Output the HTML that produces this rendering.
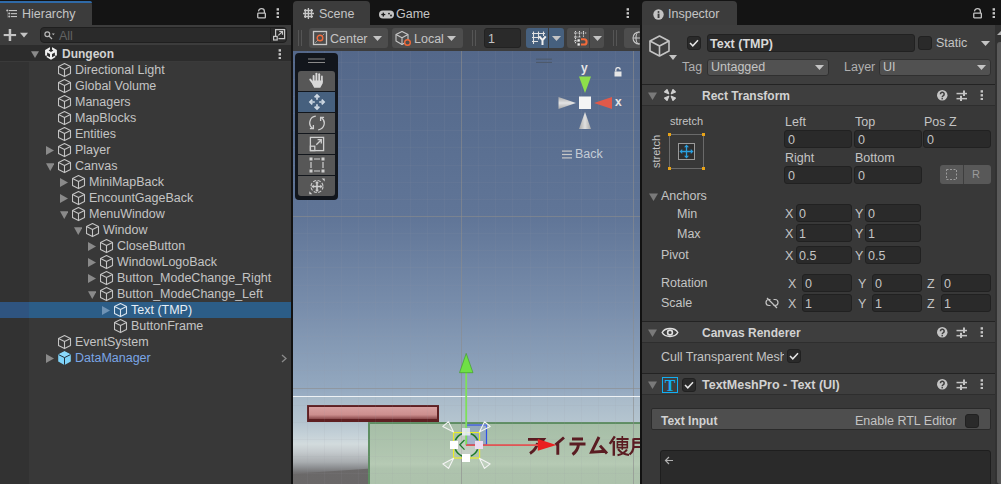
<!DOCTYPE html>
<html><head><meta charset="utf-8"><style>
html,body{margin:0;padding:0;}
body{width:1001px;height:484px;overflow:hidden;position:relative;background:#191919;font-family:"Liberation Sans", sans-serif;}
.a{position:absolute;}
.t{white-space:nowrap;line-height:1;}
svg{display:block;}
</style></head><body>
<div class="a" style="left:0px;top:0px;width:1001px;height:25px;background:#141414;"></div><div class="a" style="left:0px;top:1px;width:92px;height:24px;background:#3c3c3c;border-top-right-radius:4px;"></div><div class="a" style="left:0px;top:1px;width:92px;height:2px;background:#2f6aa8;border-top-right-radius:4px;"></div><svg class="a" style="left:6px;top:9px;" width="12" height="10" viewBox="0 0 12 10"><g fill="#c4c4c4"><rect x="2.9" y="1" width="8.1" height="1.1"/><rect x="4.9" y="4.1" width="6.1" height="1.1"/><rect x="4.9" y="7" width="6.1" height="1.1"/><circle cx="1.3" cy="1.5" r="1.1"/><circle cx="3.2" cy="4.6" r="1"/><circle cx="3.2" cy="7.5" r="1"/></g><rect x="1" y="2.6" width="0.7" height="6" fill="#6a6a6a"/></svg><div class="a t" style="left:22px;top:8px;font-size:12.5px;color:#c4c4c4;font-weight:400;">Hierarchy</div><svg class="a" style="left:257px;top:8px;" width="10" height="11" viewBox="0 0 10 11"><g fill="none" stroke="#c4c4c4" stroke-width="1.3"><rect x="0.75" y="5.2" width="7.6" height="4.6" rx="0.6"/><path d="M1.6 3.4 A2.9 2.6 0 0 1 7.4 3.2 V5"/></g></svg><svg class="a" style="left:276px;top:8px;" width="4" height="10" viewBox="0 0 4 10"><g fill="#c4c4c4"><rect x="0.6" y="0.2" width="2.4" height="2.4"/><rect x="0.6" y="4.1" width="2.4" height="2.4"/><rect x="0.6" y="8" width="2.4" height="2.4"/></g></svg><div class="a" style="left:293px;top:1px;width:77px;height:24px;background:#3c3c3c;border-top-left-radius:4px;border-top-right-radius:4px;"></div><svg class="a" style="left:302px;top:7px;" width="13" height="13" viewBox="0 0 13 13"><g stroke="#c8c8c8" stroke-width="1.3"><path d="M3.3 2 V11 M6.4 1 V12 M9.5 2 V11 M2 3.5 H11 M1 6.5 H12 M2 9.5 H11"/></g></svg><div class="a t" style="left:319px;top:8px;font-size:12.5px;color:#c4c4c4;font-weight:400;">Scene</div><svg class="a" style="left:379px;top:10px;" width="15" height="9" viewBox="0 0 15 9"><path d="M4 0.5 H11 A4 4 0 0 1 11 8.5 H4 A4 4 0 0 1 4 0.5 Z" fill="#c4c4c4"/><g fill="#191919"><rect x="2.3" y="3.9" width="4" height="1.3"/><rect x="3.65" y="2.6" width="1.3" height="4"/><circle cx="10" cy="3.6" r="0.9"/><circle cx="12" cy="5.5" r="0.9"/></g></svg><div class="a t" style="left:396px;top:8px;font-size:12.5px;color:#c4c4c4;font-weight:400;">Game</div><svg class="a" style="left:626px;top:8px;" width="4" height="10" viewBox="0 0 4 10"><g fill="#c4c4c4"><rect x="0.6" y="0.2" width="2.4" height="2.4"/><rect x="0.6" y="4.1" width="2.4" height="2.4"/><rect x="0.6" y="8" width="2.4" height="2.4"/></g></svg><div class="a" style="left:642px;top:1px;width:95px;height:24px;background:#3c3c3c;border-top-left-radius:4px;border-top-right-radius:4px;"></div><svg class="a" style="left:653px;top:9px;" width="11" height="11" viewBox="0 0 11 11"><circle cx="5.5" cy="5.5" r="5.2" fill="#c4c4c4"/><rect x="4.6" y="4.6" width="1.9" height="4.4" fill="#3c3c3c"/><circle cx="5.5" cy="2.9" r="1" fill="#3c3c3c"/></svg><div class="a t" style="left:668px;top:8px;font-size:12.5px;color:#c4c4c4;font-weight:400;">Inspector</div><svg class="a" style="left:973px;top:8px;" width="10" height="11" viewBox="0 0 10 11"><g fill="none" stroke="#c4c4c4" stroke-width="1.3"><rect x="0.75" y="5.2" width="7.6" height="4.6" rx="0.6"/><path d="M1.6 3.4 A2.9 2.6 0 0 1 7.4 3.2 V5"/></g></svg><svg class="a" style="left:992px;top:8px;" width="4" height="10" viewBox="0 0 4 10"><g fill="#c4c4c4"><rect x="0.6" y="0.2" width="2.4" height="2.4"/><rect x="0.6" y="4.1" width="2.4" height="2.4"/><rect x="0.6" y="8" width="2.4" height="2.4"/></g></svg><div class="a" style="left:0px;top:25px;width:291px;height:20px;background:#3c3c3c;"></div><div class="a" style="left:0px;top:45px;width:291px;height:439px;background:#383838;"></div><div class="a" style="left:0px;top:62px;width:29px;height:422px;background:#323232;"></div><div class="a" style="left:291px;top:25px;width:2px;height:459px;background:#121212;"></div><svg class="a" style="left:3px;top:28px;" width="26" height="14" viewBox="0 0 26 14"><g fill="#c4c4c4"><rect x="0.7" y="6" width="12.4" height="2.1"/><rect x="5.7" y="1" width="2.5" height="12"/><path d="M17 4.7 H25 L21 9.4 Z"/></g></svg><div class="a" style="left:40px;top:27px;width:247px;height:16px;background:#2a2a2a;border:1px solid #1f1f1f;border-radius:4px;box-sizing:border-box;"></div><div class="a" style="left:270px;top:28px;width:1px;height:14px;background:#1f1f1f;"></div><svg class="a" style="left:44px;top:31px;" width="12" height="9" viewBox="0 0 12 9"><g fill="none" stroke="#b8b8b8" stroke-width="1.2"><circle cx="3.3" cy="3.3" r="2.4"/><path d="M5 5 L8 8"/></g><path d="M7.8 2.5 H10.8 L9.3 4.3 Z" fill="#b8b8b8"/></svg><div class="a t" style="left:59px;top:30px;font-size:12.5px;color:#626262;font-weight:400;">All</div><svg class="a" style="left:272px;top:28px;" width="15" height="14" viewBox="0 0 15 14"><g fill="none" stroke="#c8c8c8" stroke-width="1.2"><path d="M3.6 8 V1.6 H12.6 V10.6 H6.5"/><rect x="1.6" y="8.4" width="3.6" height="3.6"/><path d="M6.3 7.4 L10.4 3.6 M7.3 3.5 H10.5 V6.7"/></g></svg><div class="a" style="left:0px;top:45px;width:291px;height:16px;background:#2c2c2c;"></div><div class="a" style="left:0px;top:61px;width:291px;height:1px;background:#3a3a3a;"></div><svg class="a" style="left:31px;top:51px;" width="8" height="7" viewBox="0 0 8 7"><path d="M0 0.3 H8 L4.0 7 Z" fill="#8a8a8a"/></svg><svg class="a" style="left:44px;top:46px;" width="14" height="15" viewBox="0 0 14 15"><path d="M7 0.5 L12.9 3.9 V10.2 L7 13.8 L1.1 10.2 V3.9 Z" fill="#f0f0f0"/><g fill="#2c2c2c"><path d="M5.9 0 H8.1 L8 3.5 L9.4 4.6 L7 5.9 L4.6 4.6 L6 3.5 Z"/><path d="M3.1 6.6 L6 7.9 V11.3 L3.1 9.7 Z"/><path d="M10.9 6.6 L8 7.9 V11.3 L10.9 9.7 Z"/><path d="M0.5 9.5 L3.1 9.7 L2.3 11.2 L0.5 10.8 Z"/><path d="M13.5 9.5 L10.9 9.7 L11.7 11.2 L13.5 10.8 Z"/></g></svg><div class="a t" style="left:62px;top:48px;font-size:12px;color:#d2d2d2;font-weight:700;">Dungeon</div><svg class="a" style="left:278px;top:49px;" width="4" height="10" viewBox="0 0 4 10"><g fill="#c4c4c4"><rect x="0.6" y="0.2" width="2.4" height="2.4"/><rect x="0.6" y="4.1" width="2.4" height="2.4"/><rect x="0.6" y="8" width="2.4" height="2.4"/></g></svg><svg class="a" style="left:58px;top:63px;" width="14" height="15" viewBox="0 0 14 15"><g fill="none" stroke="#c4c4c4" stroke-width="1.1" stroke-linejoin="round"><path d="M6.5 0.6 L12.5 3.6 V10.5 L6.5 13.6 L0.5 10.5 V3.6 Z"/><path d="M0.5 3.6 L6.5 6.6 L12.5 3.6 M6.5 6.6 V13.6"/></g></svg><div class="a t" style="left:75px;top:64px;font-size:12.5px;color:#c4c4c4;font-weight:400;">Directional Light</div><svg class="a" style="left:58px;top:79px;" width="14" height="15" viewBox="0 0 14 15"><g fill="none" stroke="#c4c4c4" stroke-width="1.1" stroke-linejoin="round"><path d="M6.5 0.6 L12.5 3.6 V10.5 L6.5 13.6 L0.5 10.5 V3.6 Z"/><path d="M0.5 3.6 L6.5 6.6 L12.5 3.6 M6.5 6.6 V13.6"/></g></svg><div class="a t" style="left:75px;top:80px;font-size:12.5px;color:#c4c4c4;font-weight:400;">Global Volume</div><svg class="a" style="left:58px;top:95px;" width="14" height="15" viewBox="0 0 14 15"><g fill="none" stroke="#c4c4c4" stroke-width="1.1" stroke-linejoin="round"><path d="M6.5 0.6 L12.5 3.6 V10.5 L6.5 13.6 L0.5 10.5 V3.6 Z"/><path d="M0.5 3.6 L6.5 6.6 L12.5 3.6 M6.5 6.6 V13.6"/></g></svg><div class="a t" style="left:75px;top:96px;font-size:12.5px;color:#c4c4c4;font-weight:400;">Managers</div><svg class="a" style="left:58px;top:111px;" width="14" height="15" viewBox="0 0 14 15"><g fill="none" stroke="#c4c4c4" stroke-width="1.1" stroke-linejoin="round"><path d="M6.5 0.6 L12.5 3.6 V10.5 L6.5 13.6 L0.5 10.5 V3.6 Z"/><path d="M0.5 3.6 L6.5 6.6 L12.5 3.6 M6.5 6.6 V13.6"/></g></svg><div class="a t" style="left:75px;top:112px;font-size:12.5px;color:#c4c4c4;font-weight:400;">MapBlocks</div><svg class="a" style="left:58px;top:127px;" width="14" height="15" viewBox="0 0 14 15"><g fill="none" stroke="#c4c4c4" stroke-width="1.1" stroke-linejoin="round"><path d="M6.5 0.6 L12.5 3.6 V10.5 L6.5 13.6 L0.5 10.5 V3.6 Z"/><path d="M0.5 3.6 L6.5 6.6 L12.5 3.6 M6.5 6.6 V13.6"/></g></svg><div class="a t" style="left:75px;top:128px;font-size:12.5px;color:#c4c4c4;font-weight:400;">Entities</div><svg class="a" style="left:46px;top:146px;" width="8" height="9" viewBox="0 0 8 9"><path d="M0 0 V9 L8 4.5 Z" fill="#8a8a8a"/></svg><svg class="a" style="left:58px;top:143px;" width="14" height="15" viewBox="0 0 14 15"><g fill="none" stroke="#c4c4c4" stroke-width="1.1" stroke-linejoin="round"><path d="M6.5 0.6 L12.5 3.6 V10.5 L6.5 13.6 L0.5 10.5 V3.6 Z"/><path d="M0.5 3.6 L6.5 6.6 L12.5 3.6 M6.5 6.6 V13.6"/></g></svg><div class="a t" style="left:75px;top:144px;font-size:12.5px;color:#c4c4c4;font-weight:400;">Player</div><svg class="a" style="left:45.5px;top:163px;" width="8.5" height="8" viewBox="0 0 8.5 8"><path d="M0 0.3 H8.5 L4.25 8 Z" fill="#8a8a8a"/></svg><svg class="a" style="left:58px;top:159px;" width="14" height="15" viewBox="0 0 14 15"><g fill="none" stroke="#c4c4c4" stroke-width="1.1" stroke-linejoin="round"><path d="M6.5 0.6 L12.5 3.6 V10.5 L6.5 13.6 L0.5 10.5 V3.6 Z"/><path d="M0.5 3.6 L6.5 6.6 L12.5 3.6 M6.5 6.6 V13.6"/></g></svg><div class="a t" style="left:75px;top:160px;font-size:12.5px;color:#c4c4c4;font-weight:400;">Canvas</div><svg class="a" style="left:60px;top:178px;" width="8" height="9" viewBox="0 0 8 9"><path d="M0 0 V9 L8 4.5 Z" fill="#8a8a8a"/></svg><svg class="a" style="left:72px;top:175px;" width="14" height="15" viewBox="0 0 14 15"><g fill="none" stroke="#c4c4c4" stroke-width="1.1" stroke-linejoin="round"><path d="M6.5 0.6 L12.5 3.6 V10.5 L6.5 13.6 L0.5 10.5 V3.6 Z"/><path d="M0.5 3.6 L6.5 6.6 L12.5 3.6 M6.5 6.6 V13.6"/></g></svg><div class="a t" style="left:89px;top:176px;font-size:12.5px;color:#c4c4c4;font-weight:400;">MiniMapBack</div><svg class="a" style="left:60px;top:194px;" width="8" height="9" viewBox="0 0 8 9"><path d="M0 0 V9 L8 4.5 Z" fill="#8a8a8a"/></svg><svg class="a" style="left:72px;top:191px;" width="14" height="15" viewBox="0 0 14 15"><g fill="none" stroke="#c4c4c4" stroke-width="1.1" stroke-linejoin="round"><path d="M6.5 0.6 L12.5 3.6 V10.5 L6.5 13.6 L0.5 10.5 V3.6 Z"/><path d="M0.5 3.6 L6.5 6.6 L12.5 3.6 M6.5 6.6 V13.6"/></g></svg><div class="a t" style="left:89px;top:192px;font-size:12.5px;color:#c4c4c4;font-weight:400;">EncountGageBack</div><svg class="a" style="left:59.5px;top:211px;" width="8.5" height="8" viewBox="0 0 8.5 8"><path d="M0 0.3 H8.5 L4.25 8 Z" fill="#8a8a8a"/></svg><svg class="a" style="left:72px;top:207px;" width="14" height="15" viewBox="0 0 14 15"><g fill="none" stroke="#c4c4c4" stroke-width="1.1" stroke-linejoin="round"><path d="M6.5 0.6 L12.5 3.6 V10.5 L6.5 13.6 L0.5 10.5 V3.6 Z"/><path d="M0.5 3.6 L6.5 6.6 L12.5 3.6 M6.5 6.6 V13.6"/></g></svg><div class="a t" style="left:89px;top:208px;font-size:12.5px;color:#c4c4c4;font-weight:400;">MenuWindow</div><svg class="a" style="left:73.5px;top:227px;" width="8.5" height="8" viewBox="0 0 8.5 8"><path d="M0 0.3 H8.5 L4.25 8 Z" fill="#8a8a8a"/></svg><svg class="a" style="left:86px;top:223px;" width="14" height="15" viewBox="0 0 14 15"><g fill="none" stroke="#c4c4c4" stroke-width="1.1" stroke-linejoin="round"><path d="M6.5 0.6 L12.5 3.6 V10.5 L6.5 13.6 L0.5 10.5 V3.6 Z"/><path d="M0.5 3.6 L6.5 6.6 L12.5 3.6 M6.5 6.6 V13.6"/></g></svg><div class="a t" style="left:103px;top:224px;font-size:12.5px;color:#c4c4c4;font-weight:400;">Window</div><svg class="a" style="left:88px;top:242px;" width="8" height="9" viewBox="0 0 8 9"><path d="M0 0 V9 L8 4.5 Z" fill="#8a8a8a"/></svg><svg class="a" style="left:100px;top:239px;" width="14" height="15" viewBox="0 0 14 15"><g fill="none" stroke="#c4c4c4" stroke-width="1.1" stroke-linejoin="round"><path d="M6.5 0.6 L12.5 3.6 V10.5 L6.5 13.6 L0.5 10.5 V3.6 Z"/><path d="M0.5 3.6 L6.5 6.6 L12.5 3.6 M6.5 6.6 V13.6"/></g></svg><div class="a t" style="left:117px;top:240px;font-size:12.5px;color:#c4c4c4;font-weight:400;">CloseButton</div><svg class="a" style="left:88px;top:258px;" width="8" height="9" viewBox="0 0 8 9"><path d="M0 0 V9 L8 4.5 Z" fill="#8a8a8a"/></svg><svg class="a" style="left:100px;top:255px;" width="14" height="15" viewBox="0 0 14 15"><g fill="none" stroke="#c4c4c4" stroke-width="1.1" stroke-linejoin="round"><path d="M6.5 0.6 L12.5 3.6 V10.5 L6.5 13.6 L0.5 10.5 V3.6 Z"/><path d="M0.5 3.6 L6.5 6.6 L12.5 3.6 M6.5 6.6 V13.6"/></g></svg><div class="a t" style="left:117px;top:256px;font-size:12.5px;color:#c4c4c4;font-weight:400;">WindowLogoBack</div><svg class="a" style="left:88px;top:274px;" width="8" height="9" viewBox="0 0 8 9"><path d="M0 0 V9 L8 4.5 Z" fill="#8a8a8a"/></svg><svg class="a" style="left:100px;top:271px;" width="14" height="15" viewBox="0 0 14 15"><g fill="none" stroke="#c4c4c4" stroke-width="1.1" stroke-linejoin="round"><path d="M6.5 0.6 L12.5 3.6 V10.5 L6.5 13.6 L0.5 10.5 V3.6 Z"/><path d="M0.5 3.6 L6.5 6.6 L12.5 3.6 M6.5 6.6 V13.6"/></g></svg><div class="a t" style="left:117px;top:272px;font-size:12.5px;color:#c4c4c4;font-weight:400;">Button_ModeChange_Right</div><svg class="a" style="left:87.5px;top:291px;" width="8.5" height="8" viewBox="0 0 8.5 8"><path d="M0 0.3 H8.5 L4.25 8 Z" fill="#8a8a8a"/></svg><svg class="a" style="left:100px;top:287px;" width="14" height="15" viewBox="0 0 14 15"><g fill="none" stroke="#c4c4c4" stroke-width="1.1" stroke-linejoin="round"><path d="M6.5 0.6 L12.5 3.6 V10.5 L6.5 13.6 L0.5 10.5 V3.6 Z"/><path d="M0.5 3.6 L6.5 6.6 L12.5 3.6 M6.5 6.6 V13.6"/></g></svg><div class="a t" style="left:117px;top:288px;font-size:12.5px;color:#c4c4c4;font-weight:400;">Button_ModeChange_Left</div><div class="a" style="left:29px;top:302px;width:262px;height:16px;background:#2c5d87;"></div><div class="a" style="left:0px;top:302px;width:29px;height:16px;background:#2f5480;"></div><svg class="a" style="left:102px;top:306px;" width="8" height="9" viewBox="0 0 8 9"><path d="M0 0 V9 L8 4.5 Z" fill="#6f93b5"/></svg><svg class="a" style="left:114px;top:303px;" width="14" height="15" viewBox="0 0 14 15"><g fill="none" stroke="#d8e4ef" stroke-width="1.1" stroke-linejoin="round"><path d="M6.5 0.6 L12.5 3.6 V10.5 L6.5 13.6 L0.5 10.5 V3.6 Z"/><path d="M0.5 3.6 L6.5 6.6 L12.5 3.6 M6.5 6.6 V13.6"/></g></svg><div class="a t" style="left:131px;top:304px;font-size:12.5px;color:#e6eef5;font-weight:400;">Text (TMP)</div><svg class="a" style="left:114px;top:319px;" width="14" height="15" viewBox="0 0 14 15"><g fill="none" stroke="#c4c4c4" stroke-width="1.1" stroke-linejoin="round"><path d="M6.5 0.6 L12.5 3.6 V10.5 L6.5 13.6 L0.5 10.5 V3.6 Z"/><path d="M0.5 3.6 L6.5 6.6 L12.5 3.6 M6.5 6.6 V13.6"/></g></svg><div class="a t" style="left:131px;top:320px;font-size:12.5px;color:#c4c4c4;font-weight:400;">ButtonFrame</div><svg class="a" style="left:58px;top:335px;" width="14" height="15" viewBox="0 0 14 15"><g fill="none" stroke="#c4c4c4" stroke-width="1.1" stroke-linejoin="round"><path d="M6.5 0.6 L12.5 3.6 V10.5 L6.5 13.6 L0.5 10.5 V3.6 Z"/><path d="M0.5 3.6 L6.5 6.6 L12.5 3.6 M6.5 6.6 V13.6"/></g></svg><div class="a t" style="left:75px;top:336px;font-size:12.5px;color:#c4c4c4;font-weight:400;">EventSystem</div><svg class="a" style="left:46px;top:354px;" width="8" height="9" viewBox="0 0 8 9"><path d="M0 0 V9 L8 4.5 Z" fill="#8a8a8a"/></svg><svg class="a" style="left:58px;top:351px;" width="14" height="15" viewBox="0 0 14 15"><path d="M6.5 0.3 L12.8 3.5 V10.6 L6.5 13.9 L0.2 10.6 V3.5 Z" fill="#7fd3f8"/><path d="M6.5 0.3 L12.8 3.5 L6.5 6.6 L0.2 3.5 Z" fill="#8ad9fb"/><path d="M0.5 3.6 L6.5 6.6 L12.5 3.6 M6.5 6.6 V13.8" fill="none" stroke="#23303a" stroke-width="1"/></svg><div class="a t" style="left:75px;top:352px;font-size:12.5px;color:#7aa6e6;font-weight:400;">DataManager</div><svg class="a" style="left:281px;top:354px;" width="6" height="9" viewBox="0 0 6 9"><path d="M1 1 L5 4.5 L1 8" fill="none" stroke="#8a8a8a" stroke-width="1.3"/></svg><div class="a" style="left:293px;top:25px;width:348px;height:26px;background:#3c3c3c;"></div><svg class="a" style="left:298px;top:30px;" width="5" height="16" viewBox="0 0 5 16"><g fill="#555555"><rect x="0" y="0" width="1" height="16"/><rect x="3" y="0" width="1" height="16"/></g></svg><div class="a" style="left:309px;top:28px;width:79px;height:20px;background:#4d4d4d;border-radius:3px;"></div><svg class="a" style="left:312px;top:30px;" width="16" height="16" viewBox="0 0 16 16"><rect x="1.5" y="1.5" width="13" height="13" fill="none" stroke="#c8c8c8" stroke-width="1.3"/><path d="M3.5 12.5 L12.5 3.5" stroke="#c8c8c8" stroke-width="1" stroke-dasharray="1.5 1"/><circle cx="8" cy="8" r="2.8" fill="#4d4d4d" stroke="#f26a3a" stroke-width="1.4"/></svg><div class="a t" style="left:330px;top:33px;font-size:12.5px;color:#c4c4c4;font-weight:400;">Center</div><svg class="a" style="left:373px;top:36px;" width="9" height="5" viewBox="0 0 9 5"><path d="M0 0 H9 L4.5 5 Z" fill="#c4c4c4"/></svg><div class="a" style="left:392px;top:28px;width:71px;height:20px;background:#4d4d4d;border-radius:3px;"></div><svg class="a" style="left:395px;top:30px;" width="17" height="17" viewBox="0 0 17 17"><g fill="none" stroke="#c8c8c8" stroke-width="1.1" stroke-linejoin="round"><path d="M7 1.5 L13 4.5 V11 L7 14.5 L1 11 V4.5 Z"/><path d="M1 4.5 L7 7.7 L13 4.5 M7 7.7 V14.5"/></g><circle cx="12.5" cy="12.5" r="2.8" fill="#4d4d4d" stroke="#f26a3a" stroke-width="1.4"/></svg><div class="a t" style="left:414px;top:33px;font-size:12.5px;color:#c4c4c4;font-weight:400;">Local</div><svg class="a" style="left:447px;top:36px;" width="9" height="5" viewBox="0 0 9 5"><path d="M0 0 H9 L4.5 5 Z" fill="#c4c4c4"/></svg><svg class="a" style="left:472px;top:30px;" width="5" height="16" viewBox="0 0 5 16"><g fill="#555555"><rect x="0" y="0" width="1" height="16"/><rect x="3" y="0" width="1" height="16"/></g></svg><div class="a" style="left:484px;top:28px;width:37px;height:20px;background:#2a2a2a;border:1px solid #222;border-radius:3px;box-sizing:border-box;"></div><div class="a t" style="left:488px;top:33px;font-size:12.5px;color:#c4c4c4;font-weight:400;">1</div><div class="a" style="left:526px;top:28px;width:38px;height:20px;background:#46607e;border-radius:3px;"></div><div class="a" style="left:548px;top:28px;width:1px;height:20px;background:#3c3c3c;"></div><svg class="a" style="left:531px;top:30px;" width="17" height="16" viewBox="0 0 17 16"><g stroke="#e0e0e0" stroke-width="1.1"><path d="M2.5 1.5 V14 M7.5 1.5 V9.5 M12.5 1.5 V6 M1 3.5 H14 M1 7.5 H8.5 M1 11.5 H7"/></g><path d="M8.3 6.3 L11.5 10.2 L14.7 6.3 M11.5 10 V15" fill="none" stroke="#f0f0f0" stroke-width="2"/></svg><svg class="a" style="left:552px;top:36px;" width="9" height="5" viewBox="0 0 9 5"><path d="M0 0 H9 L4.5 5 Z" fill="#c4c4c4"/></svg><div class="a" style="left:567px;top:28px;width:37px;height:20px;background:#4d4d4d;border-radius:3px;"></div><div class="a" style="left:589px;top:28px;width:1px;height:20px;background:#3c3c3c;"></div><svg class="a" style="left:573px;top:30px;" width="16" height="16" viewBox="0 0 16 16"><g stroke="#d8d8d8" stroke-width="1.1" stroke-dasharray="1.3 0.9"><path d="M2.5 1 V14 M6.5 1 V7.5 M10.5 1 V7 M1 3 H14 M1 7 H8 M1 11 H4.5"/></g><rect x="4.5" y="9.3" width="2.3" height="2.3" fill="#f0f0f0"/><rect x="4.5" y="13.3" width="2.3" height="2.3" fill="#f0f0f0"/><path d="M8 9.3 H11 A2.6 2.6 0 0 1 11 14.5 H8" fill="none" stroke="#f26a3a" stroke-width="2.1"/></svg><svg class="a" style="left:593px;top:36px;" width="9" height="5" viewBox="0 0 9 5"><path d="M0 0 H9 L4.5 5 Z" fill="#c4c4c4"/></svg><svg class="a" style="left:613px;top:30px;" width="5" height="16" viewBox="0 0 5 16"><g fill="#555555"><rect x="0" y="0" width="1" height="16"/><rect x="3" y="0" width="1" height="16"/></g></svg><div class="a" style="left:624px;top:28px;width:30px;height:20px;background:#4d4d4d;border-radius:3px;"></div><svg class="a" style="left:632px;top:31px;" width="14" height="14" viewBox="0 0 14 14"><g fill="none" stroke="#c8c8c8" stroke-width="1.1"><circle cx="7" cy="7" r="6"/><path d="M1 7 H13 M7 1 A3 6 0 0 0 7 13"/></g></svg><div class="a" style="left:640px;top:25px;width:2px;height:459px;background:#121212;"></div><div class="a" style="left:293px;top:51px;width:347px;height:433px;overflow:hidden;background:linear-gradient(180deg,#54688a 0px,#596e90 80px,#607597 165px,#788dab 255px,#93a8bf 337px,#9aaec3 345px);"><div class="a" style="left:0;top:345px;width:347px;height:88px;background:linear-gradient(180deg,#a8bac9 0px,#b4c4cf 25px,#c7d3d9 41px,#d2dbdd 48px,#c4cacd 56px,#a9adb0 66px,#8a8c8f 72px,#6d6b6c 78px);"></div><svg class="a" style="left:0;top:400px" width="347" height="33"><defs><linearGradient id="gd" x1="0" y1="0" x2="0" y2="1"><stop offset="0" stop-color="#858688"/><stop offset="0.12" stop-color="#6b6969"/><stop offset="1" stop-color="#6a6868"/></linearGradient></defs><path d="M0 22.8 L347 -0.5 V33 H0 Z" fill="url(#gd)"/></svg><div class="a" style="left:14px;top:354px;width:132px;height:17px;box-sizing:border-box;border:2px solid #5e1f22;border-bottom-width:3px;background:linear-gradient(180deg,#d8a0a0,#cc8e8e 65%,#8a4a4c);"></div><div class="a" style="left:75px;top:371px;width:300px;height:80px;box-sizing:border-box;border:2px solid #5e8e62;border-right:none;border-bottom:none;background:linear-gradient(180deg,#a6bea7 0px,#b2c7b1 35px,#b6cab4 40px,#aec3ad 45px,#abc0aa 80px);"></div><svg class="a" style="left:0;top:0" width="347" height="433"><line x1="14.50" y1="0" x2="14.50" y2="433" stroke="rgba(150,160,170,0.09)" stroke-width="1"/><line x1="31.50" y1="0" x2="31.50" y2="433" stroke="rgba(150,160,170,0.09)" stroke-width="1"/><line x1="48.50" y1="0" x2="48.50" y2="433" stroke="rgba(150,160,170,0.09)" stroke-width="1"/><line x1="65.50" y1="0" x2="65.50" y2="433" stroke="rgba(150,160,170,0.09)" stroke-width="1"/><line x1="82.50" y1="0" x2="82.50" y2="433" stroke="rgba(150,160,170,0.09)" stroke-width="1"/><line x1="99.50" y1="0" x2="99.50" y2="433" stroke="rgba(150,160,170,0.09)" stroke-width="1"/><line x1="117.50" y1="0" x2="117.50" y2="433" stroke="rgba(150,160,170,0.09)" stroke-width="1"/><line x1="134.50" y1="0" x2="134.50" y2="433" stroke="rgba(150,160,170,0.09)" stroke-width="1"/><line x1="151.50" y1="0" x2="151.50" y2="433" stroke="rgba(150,160,170,0.09)" stroke-width="1"/><line x1="168.50" y1="0" x2="168.50" y2="433" stroke="rgba(140,140,140,0.6)" stroke-width="1"/><line x1="185.50" y1="0" x2="185.50" y2="433" stroke="rgba(150,160,170,0.09)" stroke-width="1"/><line x1="202.50" y1="0" x2="202.50" y2="433" stroke="rgba(150,160,170,0.09)" stroke-width="1"/><line x1="219.50" y1="0" x2="219.50" y2="433" stroke="rgba(150,160,170,0.09)" stroke-width="1"/><line x1="237.50" y1="0" x2="237.50" y2="433" stroke="rgba(150,160,170,0.09)" stroke-width="1"/><line x1="254.50" y1="0" x2="254.50" y2="433" stroke="rgba(150,160,170,0.09)" stroke-width="1"/><line x1="271.50" y1="0" x2="271.50" y2="433" stroke="rgba(150,160,170,0.09)" stroke-width="1"/><line x1="288.50" y1="0" x2="288.50" y2="433" stroke="rgba(150,160,170,0.09)" stroke-width="1"/><line x1="305.50" y1="0" x2="305.50" y2="433" stroke="rgba(150,160,170,0.09)" stroke-width="1"/><line x1="322.50" y1="0" x2="322.50" y2="433" stroke="rgba(150,160,170,0.09)" stroke-width="1"/><line x1="340.50" y1="0" x2="340.50" y2="433" stroke="rgba(140,140,140,0.6)" stroke-width="1"/><line x1="0" y1="11.50" x2="347" y2="11.50" stroke="rgba(150,160,170,0.09)" stroke-width="1"/><line x1="0" y1="28.50" x2="347" y2="28.50" stroke="rgba(150,160,170,0.09)" stroke-width="1"/><line x1="0" y1="45.50" x2="347" y2="45.50" stroke="rgba(150,160,170,0.09)" stroke-width="1"/><line x1="0" y1="62.50" x2="347" y2="62.50" stroke="rgba(150,160,170,0.09)" stroke-width="1"/><line x1="0" y1="79.50" x2="347" y2="79.50" stroke="rgba(150,160,170,0.09)" stroke-width="1"/><line x1="0" y1="96.50" x2="347" y2="96.50" stroke="rgba(150,160,170,0.09)" stroke-width="1"/><line x1="0" y1="114.50" x2="347" y2="114.50" stroke="rgba(150,160,170,0.09)" stroke-width="1"/><line x1="0" y1="131.50" x2="347" y2="131.50" stroke="rgba(150,160,170,0.09)" stroke-width="1"/><line x1="0" y1="148.50" x2="347" y2="148.50" stroke="rgba(150,160,170,0.09)" stroke-width="1"/><line x1="0" y1="165.50" x2="347" y2="165.50" stroke="rgba(140,140,140,0.6)" stroke-width="1"/><line x1="0" y1="182.50" x2="347" y2="182.50" stroke="rgba(150,160,170,0.09)" stroke-width="1"/><line x1="0" y1="199.50" x2="347" y2="199.50" stroke="rgba(150,160,170,0.09)" stroke-width="1"/><line x1="0" y1="216.50" x2="347" y2="216.50" stroke="rgba(150,160,170,0.09)" stroke-width="1"/><line x1="0" y1="234.50" x2="347" y2="234.50" stroke="rgba(150,160,170,0.09)" stroke-width="1"/><line x1="0" y1="251.50" x2="347" y2="251.50" stroke="rgba(150,160,170,0.09)" stroke-width="1"/><line x1="0" y1="268.50" x2="347" y2="268.50" stroke="rgba(150,160,170,0.09)" stroke-width="1"/><line x1="0" y1="285.50" x2="347" y2="285.50" stroke="rgba(150,160,170,0.09)" stroke-width="1"/><line x1="0" y1="302.50" x2="347" y2="302.50" stroke="rgba(150,160,170,0.09)" stroke-width="1"/><line x1="0" y1="319.50" x2="347" y2="319.50" stroke="rgba(150,160,170,0.09)" stroke-width="1"/><line x1="0" y1="337.50" x2="347" y2="337.50" stroke="rgba(140,140,140,0.6)" stroke-width="1"/><line x1="0" y1="354.50" x2="347" y2="354.50" stroke="rgba(150,160,170,0.09)" stroke-width="1"/><line x1="0" y1="371.50" x2="347" y2="371.50" stroke="rgba(150,160,170,0.09)" stroke-width="1"/><line x1="0" y1="388.50" x2="347" y2="388.50" stroke="rgba(150,160,170,0.09)" stroke-width="1"/><line x1="0" y1="405.50" x2="347" y2="405.50" stroke="rgba(150,160,170,0.09)" stroke-width="1"/><line x1="0" y1="422.50" x2="347" y2="422.50" stroke="rgba(150,160,170,0.09)" stroke-width="1"/></svg><div class="a" style="left:0;top:344.6px;width:347px;height:1.5px;background:#eef2f5;"></div></div><div class="a" style="left:295px;top:53px;width:43px;height:147px;background:#12161c;border-radius:4px;"></div><svg class="a" style="left:308px;top:58px;" width="18" height="6" viewBox="0 0 18 6"><g fill="#8a8a8a"><rect x="0" y="0.5" width="17" height="1"/><rect x="0" y="4" width="17" height="1"/></g></svg><div class="a" style="left:298px;top:71px;width:37px;height:20px;background:#575757;border-radius:3px 3px 0 0;"></div><div class="a" style="left:298px;top:92px;width:37px;height:20px;background:#46607e;"></div><div class="a" style="left:298px;top:113px;width:37px;height:20px;background:#575757;"></div><div class="a" style="left:298px;top:134px;width:37px;height:20px;background:#575757;"></div><div class="a" style="left:298px;top:155px;width:37px;height:20px;background:#575757;"></div><div class="a" style="left:298px;top:176px;width:37px;height:20px;background:#575757;border-radius:0 0 3px 3px;"></div><svg class="a" style="left:309px;top:72px;" width="16" height="17" viewBox="0 0 16 17"><g stroke="#d8d8d8" stroke-linecap="round" fill="none"><path d="M4.6 4 V9.5" stroke-width="1.9"/><path d="M7.4 1.6 V9" stroke-width="1.9"/><path d="M10.2 2.2 V9" stroke-width="1.9"/><path d="M12.9 4.4 V10" stroke-width="1.7"/><path d="M1.3 7.6 L4.2 11.5" stroke-width="1.9"/></g><path d="M3.6 8.5 H13.8 L13.6 11.5 L11.3 15.8 H5.2 L3.2 12 Z" fill="#d8d8d8"/></svg><svg class="a" style="left:308px;top:93px;" width="18" height="18" viewBox="0 0 18 18"><g fill="none" stroke="#d0dae4" stroke-width="1.7"><path d="M9 2.5 V6.8 M9 11.2 V15.5 M2.5 9 H6.8 M11.2 9 H15.5"/><path d="M6.6 4.3 L9 1.9 L11.4 4.3 M6.6 13.7 L9 16.1 L11.4 13.7 M4.3 6.6 L1.9 9 L4.3 11.4 M13.7 6.6 L16.1 9 L13.7 11.4"/></g></svg><svg class="a" style="left:309px;top:115px;" width="16" height="16" viewBox="0 0 16 16"><g fill="none" stroke="#cfcfcf" stroke-width="1.3"><path d="M6.8 1.2 A6.6 6.6 0 0 0 3.6 13.2"/><path d="M9.2 14.8 A6.6 6.6 0 0 0 12.4 2.8"/><path d="M0.9 13.6 H4.4 V10.1"/><path d="M15.1 2.4 H11.6 V5.9"/></g></svg><svg class="a" style="left:309px;top:136px;" width="16" height="16" viewBox="0 0 16 16"><g fill="none" stroke="#cfcfcf" stroke-width="1.3"><rect x="1.4" y="1.4" width="13.2" height="13.2"/><rect x="1.4" y="10.2" width="4.4" height="4.4"/><path d="M7.3 8.7 L12.3 3.7 M8.6 3.7 H12.3 V7.4"/></g></svg><svg class="a" style="left:309px;top:157px;" width="16" height="16" viewBox="0 0 16 16"><g fill="#cfcfcf"><rect x="0.5" y="0.5" width="3" height="3"/><rect x="12.5" y="0.5" width="3" height="3"/><rect x="0.5" y="12.5" width="3" height="3"/><rect x="12.5" y="12.5" width="3" height="3"/></g><g stroke="#cfcfcf" stroke-width="1.2"><path d="M5 2 H11 M5 14 H11 M2 5 V11 M14 5 V11"/></g></svg><svg class="a" style="left:309px;top:178px;" width="16" height="17" viewBox="0 0 16 17"><g fill="none" stroke="#cfcfcf" stroke-width="1.1"><circle cx="8" cy="8.5" r="6" stroke-dasharray="3.2 1.5"/></g><g fill="none" stroke="#cfcfcf" stroke-width="1.6"><path d="M8 4.5 V12.5 M4 8.5 H12"/></g><g fill="#cfcfcf"><path d="M8 3 L10 5.2 H6 Z M8 14 L10 11.8 H6 Z M2.5 8.5 L4.7 6.5 V10.5 Z M13.5 8.5 L11.3 6.5 V10.5 Z M0.3 16.3 L0.3 13.3 L3.3 16.3 Z M15.7 0.5 L15.7 3.5 L12.7 0.5 Z"/></g></svg><svg class="a" style="left:536px;top:58px;" width="17" height="6" viewBox="0 0 17 6"><g fill="#4e5a6c"><rect x="0" y="0.6" width="16" height="1.1"/><rect x="0" y="3.9" width="16" height="1.1"/></g></svg><div class="a t" style="left:581px;top:62px;font-size:12px;color:#e6e6e6;font-weight:700;">y</div><div class="a t" style="left:615px;top:96px;font-size:12px;color:#e6e6e6;font-weight:700;">x</div><svg class="a" style="left:614px;top:67px;" width="8" height="10" viewBox="0 0 8 10"><path d="M1.8 4.5 V2.8 A2.2 2.2 0 0 1 6.2 2.8" fill="none" stroke="#e6e6e6" stroke-width="1.3"/><rect x="0.5" y="4.5" width="7" height="5" fill="#e6e6e6"/></svg><svg class="a" style="left:556px;top:74px;" width="60" height="58" viewBox="0 0 60 58"><defs><linearGradient id="cg" x1="0" y1="0" x2="1" y2="0"><stop offset="0" stop-color="#a8a8a8"/><stop offset="0.5" stop-color="#e0e0e0"/><stop offset="1" stop-color="#a8a8a8"/></linearGradient><linearGradient id="cgv" x1="0" y1="0" x2="0" y2="1"><stop offset="0" stop-color="#a8a8a8"/><stop offset="0.5" stop-color="#e4e4e4"/><stop offset="1" stop-color="#a8a8a8"/></linearGradient></defs><path d="M23 2.5 H35 L29 19 Z" fill="#8ee04a"/><path d="M23 55 H35 L29 38 Z" fill="url(#cg)"/><path d="M2.5 23 V35 L20 29 Z" fill="url(#cgv)"/><path d="M56 23 V35 L38 29 Z" fill="#e0594a"/><rect x="23" y="22.5" width="12" height="12.5" fill="#f4f4f4"/></svg><svg class="a" style="left:562px;top:150px;" width="11" height="9" viewBox="0 0 11 9"><g fill="#c8c8c8"><rect x="0" y="0.5" width="10" height="1.2"/><rect x="0" y="3.9" width="10" height="1.2"/><rect x="0" y="7.3" width="10" height="1.2"/></g></svg><div class="a t" style="left:575px;top:148px;font-size:12.5px;color:#c4ccd6;font-weight:400;">Back</div><svg class="a" style="left:526px;top:434px;" width="114" height="24" viewBox="0 0 114 24"><g fill="none" stroke="#5a1c22" stroke-width="2.9" stroke-linecap="butt" stroke-linejoin="miter"><path d="M2 5.4 H17.5 L14.5 9.5 M11.5 9 C10.5 14 8 17 4 19.5"/><path d="M38 3.5 L29.5 10.8 M31.8 9 V20.8"/><path d="M46 5 H57 M43.5 10 H59.5 M52.5 10.5 C52 15 50 18 46.5 20.5"/><path d="M73 3 L65.5 18.2 L79.5 17.2 M74 11.6 L81 19.5"/><path d="M88.8 2.3 L83.8 9.8 M87.8 7 V21.7" stroke-width="2.4"/><path d="M90.5 5 H102.6 M92 15.2 C95 19 99 20.5 103 21 M101 15.5 C99 18.5 95 20.5 91.5 21.2" stroke-width="2.1"/><path d="M96.3 2 V15.7 M91.4 7.9 H101.3 V13.6 H91.4 Z M91.4 10.75 H101.3" stroke-width="1.6"/><path d="M107.4 4.5 V13 C107.4 16 106 18.5 103.5 20.5 M107.4 5 H116 M107.4 8.6 H116 M107.4 13 H116" stroke-width="2.2"/></g></svg><svg class="a" style="left:436px;top:340px;" width="205" height="144" viewBox="0 0 205 144"><circle cx="30.5" cy="104.8" r="12" fill="rgba(215,215,215,0.55)"/><rect x="30.5" y="85" width="20" height="20" fill="rgba(120,140,215,0.4)" stroke="#2f4fe8" stroke-width="1.2"/><rect x="17.6" y="92.6" width="26" height="25.4" fill="none" stroke="#f0f020" stroke-width="1.1"/><path d="M41.63 109.30 A12 12 0 0 1 35.00 115.93 M26.00 115.93 A12 12 0 0 1 19.37 109.30 M19.37 100.30 A12 12 0 0 1 26.00 93.67 M35.00 93.67 A12 12 0 0 1 41.63 100.30" fill="none" stroke="#1e7a2a" stroke-width="1.6"/><path d="M28.5 100 L23.8 104.8 L28.5 109.6" fill="none" stroke="#1e7a2a" stroke-width="1.3"/><rect x="29.3" y="30" width="1.8" height="75" fill="#7ee05a"/><path d="M23.5 32.7 L30.2 13.4 L37 32.7 Z" fill="#6fe045" stroke="#3a9a20" stroke-width="0.6"/><rect x="30" y="104.2" width="74" height="1.8" fill="#e05555"/><path d="M101.8 99 L120.4 104.9 L101.8 110.8 Z" fill="#ea2020"/><rect x="14" y="101" width="8" height="8" fill="#ffffff"/><rect x="26" y="114" width="8" height="8" fill="#ffffff"/><rect x="26" y="88" width="8" height="7.5" fill="rgba(240,240,255,0.8)"/><rect x="39" y="101" width="8" height="8" fill="#eedcf0"/><path d="M6.8 86.4 L12.5 81.8 L17.6 92 Z M54.2 86.4 L48.5 81.8 L43.4 92 Z M6.8 123.9 L12.5 128.4 L17.6 118.2 Z M54.2 123.9 L48.5 128.4 L43.4 118.2 Z" fill="rgba(255,255,255,0.12)" stroke="#f4f4f4" stroke-width="1.1" stroke-linejoin="round"/></svg><div class="a" style="left:642px;top:25px;width:359px;height:459px;background:#383838;"></div><div class="a" style="left:642px;top:25px;width:353px;height:59px;background:#3e3e3e;"></div><div class="a" style="left:995px;top:25px;width:6px;height:459px;background:#323232;"></div><div class="a" style="left:997px;top:42px;width:4px;height:442px;background:#5a5a5a;border-radius:3px 0 0 3px;"></div><svg class="a" style="left:997px;top:31px;" width="4" height="5" viewBox="0 0 4 5"><path d="M0 4 L4 0 V4 Z" fill="#b0b0b0"/></svg><svg class="a" style="left:649px;top:35px;" width="23" height="24" viewBox="0 0 23 24"><g fill="none" stroke="#c4c4c4" stroke-width="1.6" stroke-linejoin="round"><path d="M10.5 1 L20 6 V16 L10.5 21 L1 16 V6 Z"/><path d="M1 6 L10.5 11 L20 6 M10.5 11 V21"/></g></svg><svg class="a" style="left:669px;top:55px;" width="8" height="5" viewBox="0 0 8 5"><path d="M0 0 H8 L4 5 Z" fill="#c4c4c4"/></svg><div class="a" style="left:687px;top:36px;width:14px;height:14px;background:#2a2a2a;border:1px solid #212121;border-radius:3px;box-sizing:border-box;"></div><svg class="a" style="left:689px;top:39px;" width="10" height="8" viewBox="0 0 10 8"><path d="M1 4 L3.8 6.8 L9 1.2" fill="none" stroke="#e6e6e6" stroke-width="1.5"/></svg><div class="a" style="left:707px;top:34px;width:208px;height:18px;background:#2a2a2a;border:1px solid #212121;border-radius:3px;box-sizing:border-box;"></div><div class="a t" style="left:710px;top:38px;font-size:12.5px;color:#d8d8d8;font-weight:700;">Text (TMP)</div><div class="a" style="left:918px;top:36px;width:14px;height:14px;background:#2a2a2a;border:1px solid #212121;border-radius:3px;box-sizing:border-box;"></div><div class="a t" style="left:936px;top:37px;font-size:12.5px;color:#c4c4c4;font-weight:400;">Static</div><svg class="a" style="left:981px;top:41px;" width="9" height="5" viewBox="0 0 9 5"><path d="M0 0 H9 L4.5 5 Z" fill="#c4c4c4"/></svg><div class="a t" style="left:682px;top:61px;font-size:12.5px;color:#b0b0b0;font-weight:400;">Tag</div><div class="a" style="left:707px;top:59px;width:122px;height:17px;background:#515151;border:1px solid #303030;border-radius:3px;box-sizing:border-box;"></div><div class="a t" style="left:711px;top:61px;font-size:12.5px;color:#c4c4c4;font-weight:400;">Untagged</div><svg class="a" style="left:815px;top:65px;" width="9" height="5" viewBox="0 0 9 5"><path d="M0 0 H9 L4.5 5 Z" fill="#c4c4c4"/></svg><div class="a t" style="left:844px;top:61px;font-size:12.5px;color:#b0b0b0;font-weight:400;">Layer</div><div class="a" style="left:879px;top:59px;width:112px;height:17px;background:#515151;border:1px solid #303030;border-radius:3px;box-sizing:border-box;"></div><div class="a t" style="left:883px;top:61px;font-size:12.5px;color:#c4c4c4;font-weight:400;">UI</div><svg class="a" style="left:977px;top:65px;" width="9" height="5" viewBox="0 0 9 5"><path d="M0 0 H9 L4.5 5 Z" fill="#c4c4c4"/></svg><div class="a" style="left:642px;top:84px;width:353px;height:1px;background:#232323;"></div><div class="a" style="left:642px;top:85px;width:353px;height:20px;background:#3e3e3e;"></div><div class="a" style="left:642px;top:105px;width:353px;height:1px;background:#2e2e2e;"></div><svg class="a" style="left:648px;top:92px;" width="9" height="8" viewBox="0 0 9 8"><path d="M0 0.5 H9 L4.5 8 Z" fill="#7a7a7a"/></svg><svg class="a" style="left:663px;top:88px" width="14" height="14" viewBox="0 0 14 14"><g fill="#d0d0d0" stroke="#d0d0d0" stroke-width="1.3" stroke-linejoin="round"><path d="M1.6 4 L4 1.6 L5.6 5.6 Z"/><path d="M12.4 4 L10 1.6 L8.4 5.6 Z"/><path d="M1.6 10 L4 12.4 L5.6 8.4 Z"/><path d="M12.4 10 L10 12.4 L8.4 8.4 Z"/></g></svg><div class="a t" style="left:702px;top:90px;font-size:12px;color:#d2d2d2;font-weight:700;">Rect Transform</div><svg class="a" style="left:937px;top:90px;" width="11" height="11" viewBox="0 0 11 11"><circle cx="5.25" cy="5.25" r="5.25" fill="#c4c4c4"/><path d="M3.4 4.2 A1.9 1.9 0 1 1 6.1 5.8 C5.4 6.2 5.2 6.5 5.2 7.2" fill="none" stroke="#3e3e3e" stroke-width="1.5"/><rect x="4.5" y="8" width="1.4" height="1.4" fill="#3e3e3e"/></svg><svg class="a" style="left:956px;top:90px;" width="12" height="11" viewBox="0 0 12 11"><g fill="#c4c4c4"><rect x="0.5" y="2.8" width="10.5" height="1.5"/><rect x="0.5" y="7.9" width="10.5" height="1.5"/><rect x="7" y="0.5" width="2" height="5.5"/><rect x="4" y="5.8" width="2" height="5.2"/></g><g fill="#3e3e3e"><rect x="0.5" y="7.9" width="0" height="1.5"/></g></svg><svg class="a" style="left:980px;top:90px;" width="4" height="10" viewBox="0 0 4 10"><g fill="#c4c4c4"><rect x="0.6" y="0.2" width="2.4" height="2.4"/><rect x="0.6" y="4.1" width="2.4" height="2.4"/><rect x="0.6" y="8" width="2.4" height="2.4"/></g></svg><div class="a t" style="left:670px;top:116px;font-size:11px;color:#c4c4c4;font-weight:400;">stretch</div><div class="a t" style="left:635px;top:146px;width:42px;font-size:11px;color:#c4c4c4;transform:rotate(-90deg);text-align:center;">stretch</div><div class="a" style="left:669px;top:134px;width:35px;height:35px;border:1px solid #6a6a6a;box-sizing:border-box;"></div><svg class="a" style="left:667px;top:132px;" width="39" height="39" viewBox="0 0 39 39"><g fill="#e8a317"><rect x="1" y="1" width="3" height="3"/><rect x="35" y="1" width="3" height="3"/><rect x="1" y="35" width="3" height="3"/><rect x="35" y="35" width="3" height="3"/></g></svg><div class="a" style="left:678px;top:143px;width:17px;height:17px;background:#2e2e2e;border:1px solid #9a9a9a;box-sizing:border-box;"></div><svg class="a" style="left:679px;top:144px;" width="15" height="15" viewBox="0 0 15 15"><g stroke="#2aa0e0" stroke-width="1.3"><path d="M7.5 2 V13 M2 7.5 H13"/></g><g fill="#2aa0e0"><path d="M7.5 0.5 L10 3.2 H5 Z M7.5 14.5 L10 11.8 H5 Z M0.5 7.5 L3.2 5 V10 Z M14.5 7.5 L11.8 5 V10 Z"/></g></svg><div class="a t" style="left:785px;top:116px;font-size:12.5px;color:#c4c4c4;font-weight:400;">Left</div><div class="a t" style="left:855px;top:116px;font-size:12.5px;color:#c4c4c4;font-weight:400;">Top</div><div class="a t" style="left:924px;top:116px;font-size:12.5px;color:#c4c4c4;font-weight:400;">Pos Z</div><div class="a" style="left:784px;top:130px;width:68px;height:18px;background:#2a2a2a;border:1px solid #212121;border-radius:3px;box-sizing:border-box;"></div><div class="a t" style="left:788px;top:134px;font-size:12.5px;color:#c4c4c4;font-weight:400;">0</div><div class="a" style="left:854px;top:130px;width:68px;height:18px;background:#2a2a2a;border:1px solid #212121;border-radius:3px;box-sizing:border-box;"></div><div class="a t" style="left:858px;top:134px;font-size:12.5px;color:#c4c4c4;font-weight:400;">0</div><div class="a" style="left:923px;top:130px;width:68px;height:18px;background:#2a2a2a;border:1px solid #212121;border-radius:3px;box-sizing:border-box;"></div><div class="a t" style="left:927px;top:134px;font-size:12.5px;color:#c4c4c4;font-weight:400;">0</div><div class="a t" style="left:785px;top:152px;font-size:12.5px;color:#c4c4c4;font-weight:400;">Right</div><div class="a t" style="left:855px;top:152px;font-size:12.5px;color:#c4c4c4;font-weight:400;">Bottom</div><div class="a" style="left:784px;top:166px;width:68px;height:18px;background:#2a2a2a;border:1px solid #212121;border-radius:3px;box-sizing:border-box;"></div><div class="a t" style="left:788px;top:170px;font-size:12.5px;color:#c4c4c4;font-weight:400;">0</div><div class="a" style="left:854px;top:166px;width:68px;height:18px;background:#2a2a2a;border:1px solid #212121;border-radius:3px;box-sizing:border-box;"></div><div class="a t" style="left:858px;top:170px;font-size:12.5px;color:#c4c4c4;font-weight:400;">0</div><div class="a" style="left:940px;top:165px;width:51px;height:19px;background:#585858;border-radius:3px;"></div><div class="a" style="left:963px;top:165px;width:1px;height:19px;background:#3e3e3e;"></div><svg class="a" style="left:945px;top:168px;" width="13" height="13" viewBox="0 0 13 13"><rect x="1.5" y="1.5" width="10" height="10" fill="none" stroke="#9a9a9a" stroke-width="1" stroke-dasharray="2 1.5"/></svg><div class="a t" style="left:972px;top:169px;font-size:11px;color:#9a9a9a;font-weight:400;">R</div><svg class="a" style="left:649px;top:193px;" width="9" height="8" viewBox="0 0 9 8"><path d="M0 0.5 H9 L4.5 8 Z" fill="#7a7a7a"/></svg><div class="a t" style="left:661px;top:190px;font-size:12.5px;color:#c4c4c4;font-weight:400;">Anchors</div><div class="a t" style="left:677px;top:208px;font-size:12.5px;color:#c4c4c4;font-weight:400;">Min</div><div class="a t" style="left:677px;top:228px;font-size:12.5px;color:#c4c4c4;font-weight:400;">Max</div><div class="a t" style="left:661px;top:249px;font-size:12.5px;color:#c4c4c4;font-weight:400;">Pivot</div><div class="a t" style="left:785px;top:208px;font-size:12.5px;color:#c4c4c4;font-weight:400;">X</div><div class="a" style="left:796px;top:204px;width:56px;height:18px;background:#2a2a2a;border:1px solid #212121;border-radius:3px;box-sizing:border-box;"></div><div class="a t" style="left:799px;top:208px;font-size:12.5px;color:#c4c4c4;font-weight:400;">0</div><div class="a t" style="left:855px;top:208px;font-size:12.5px;color:#c4c4c4;font-weight:400;">Y</div><div class="a" style="left:865px;top:204px;width:56px;height:18px;background:#2a2a2a;border:1px solid #212121;border-radius:3px;box-sizing:border-box;"></div><div class="a t" style="left:868px;top:208px;font-size:12.5px;color:#c4c4c4;font-weight:400;">0</div><div class="a t" style="left:785px;top:228px;font-size:12.5px;color:#c4c4c4;font-weight:400;">X</div><div class="a" style="left:796px;top:224px;width:56px;height:18px;background:#2a2a2a;border:1px solid #212121;border-radius:3px;box-sizing:border-box;"></div><div class="a t" style="left:799px;top:228px;font-size:12.5px;color:#c4c4c4;font-weight:400;">1</div><div class="a t" style="left:855px;top:228px;font-size:12.5px;color:#c4c4c4;font-weight:400;">Y</div><div class="a" style="left:865px;top:224px;width:56px;height:18px;background:#2a2a2a;border:1px solid #212121;border-radius:3px;box-sizing:border-box;"></div><div class="a t" style="left:868px;top:228px;font-size:12.5px;color:#c4c4c4;font-weight:400;">1</div><div class="a t" style="left:785px;top:250px;font-size:12.5px;color:#c4c4c4;font-weight:400;">X</div><div class="a" style="left:796px;top:246px;width:56px;height:18px;background:#2a2a2a;border:1px solid #212121;border-radius:3px;box-sizing:border-box;"></div><div class="a t" style="left:799px;top:250px;font-size:12.5px;color:#c4c4c4;font-weight:400;">0.5</div><div class="a t" style="left:855px;top:250px;font-size:12.5px;color:#c4c4c4;font-weight:400;">Y</div><div class="a" style="left:865px;top:246px;width:56px;height:18px;background:#2a2a2a;border:1px solid #212121;border-radius:3px;box-sizing:border-box;"></div><div class="a t" style="left:868px;top:250px;font-size:12.5px;color:#c4c4c4;font-weight:400;">0.5</div><div class="a t" style="left:661px;top:277px;font-size:12.5px;color:#c4c4c4;font-weight:400;">Rotation</div><div class="a t" style="left:661px;top:297px;font-size:12.5px;color:#c4c4c4;font-weight:400;">Scale</div><svg class="a" style="left:765px;top:297px;" width="14" height="12" viewBox="0 0 14 12"><g fill="none" stroke="#c4c4c4" stroke-width="1.2"><path d="M5.5 2.5 H4 A3 3 0 0 0 4 8.5 H5.5 M8.5 2.5 H10 A3 3 0 0 1 10 8.5 H8.5"/><path d="M2 1 L12 11"/></g></svg><div class="a t" style="left:788px;top:278px;font-size:12.5px;color:#c4c4c4;font-weight:400;">X</div><div class="a" style="left:802px;top:274px;width:50px;height:18px;background:#2a2a2a;border:1px solid #212121;border-radius:3px;box-sizing:border-box;"></div><div class="a t" style="left:805px;top:278px;font-size:12.5px;color:#c4c4c4;font-weight:400;">0</div><div class="a t" style="left:858px;top:278px;font-size:12.5px;color:#c4c4c4;font-weight:400;">Y</div><div class="a" style="left:872px;top:274px;width:50px;height:18px;background:#2a2a2a;border:1px solid #212121;border-radius:3px;box-sizing:border-box;"></div><div class="a t" style="left:875px;top:278px;font-size:12.5px;color:#c4c4c4;font-weight:400;">0</div><div class="a t" style="left:927px;top:278px;font-size:12.5px;color:#c4c4c4;font-weight:400;">Z</div><div class="a" style="left:941px;top:274px;width:50px;height:18px;background:#2a2a2a;border:1px solid #212121;border-radius:3px;box-sizing:border-box;"></div><div class="a t" style="left:944px;top:278px;font-size:12.5px;color:#c4c4c4;font-weight:400;">0</div><div class="a t" style="left:788px;top:298px;font-size:12.5px;color:#c4c4c4;font-weight:400;">X</div><div class="a" style="left:802px;top:294px;width:50px;height:18px;background:#2a2a2a;border:1px solid #212121;border-radius:3px;box-sizing:border-box;"></div><div class="a t" style="left:805px;top:298px;font-size:12.5px;color:#c4c4c4;font-weight:400;">1</div><div class="a t" style="left:858px;top:298px;font-size:12.5px;color:#c4c4c4;font-weight:400;">Y</div><div class="a" style="left:872px;top:294px;width:50px;height:18px;background:#2a2a2a;border:1px solid #212121;border-radius:3px;box-sizing:border-box;"></div><div class="a t" style="left:875px;top:298px;font-size:12.5px;color:#c4c4c4;font-weight:400;">1</div><div class="a t" style="left:927px;top:298px;font-size:12.5px;color:#c4c4c4;font-weight:400;">Z</div><div class="a" style="left:941px;top:294px;width:50px;height:18px;background:#2a2a2a;border:1px solid #212121;border-radius:3px;box-sizing:border-box;"></div><div class="a t" style="left:944px;top:298px;font-size:12.5px;color:#c4c4c4;font-weight:400;">1</div><div class="a" style="left:642px;top:321px;width:353px;height:1px;background:#232323;"></div><div class="a" style="left:642px;top:322px;width:353px;height:20px;background:#3e3e3e;"></div><div class="a" style="left:642px;top:342px;width:353px;height:1px;background:#2e2e2e;"></div><svg class="a" style="left:648px;top:329px;" width="9" height="8" viewBox="0 0 9 8"><path d="M0 0.5 H9 L4.5 8 Z" fill="#7a7a7a"/></svg><svg class="a" style="left:661px;top:326px" width="18" height="13" viewBox="0 0 18 13"><path d="M1.2 6.5 C4 1.3 14 1.3 16.8 6.5 C14 11.7 4 11.7 1.2 6.5 Z" fill="none" stroke="#e0e0e0" stroke-width="1.5"/><circle cx="9" cy="6.5" r="2.4" fill="none" stroke="#e0e0e0" stroke-width="1.6"/></svg><div class="a t" style="left:702px;top:327px;font-size:12px;color:#d2d2d2;font-weight:700;">Canvas Renderer</div><svg class="a" style="left:937px;top:327px;" width="11" height="11" viewBox="0 0 11 11"><circle cx="5.25" cy="5.25" r="5.25" fill="#c4c4c4"/><path d="M3.4 4.2 A1.9 1.9 0 1 1 6.1 5.8 C5.4 6.2 5.2 6.5 5.2 7.2" fill="none" stroke="#3e3e3e" stroke-width="1.5"/><rect x="4.5" y="8" width="1.4" height="1.4" fill="#3e3e3e"/></svg><svg class="a" style="left:956px;top:327px;" width="12" height="11" viewBox="0 0 12 11"><g fill="#c4c4c4"><rect x="0.5" y="2.8" width="10.5" height="1.5"/><rect x="0.5" y="7.9" width="10.5" height="1.5"/><rect x="7" y="0.5" width="2" height="5.5"/><rect x="4" y="5.8" width="2" height="5.2"/></g><g fill="#3e3e3e"><rect x="0.5" y="7.9" width="0" height="1.5"/></g></svg><svg class="a" style="left:980px;top:327px;" width="4" height="10" viewBox="0 0 4 10"><g fill="#c4c4c4"><rect x="0.6" y="0.2" width="2.4" height="2.4"/><rect x="0.6" y="4.1" width="2.4" height="2.4"/><rect x="0.6" y="8" width="2.4" height="2.4"/></g></svg><div class="a t" style="left:661px;top:351px;width:123px;overflow:hidden;font-size:12.5px;color:#c4c4c4;">Cull Transparent Mesh</div><div class="a" style="left:787px;top:349px;width:14px;height:14px;background:#2a2a2a;border:1px solid #212121;border-radius:3px;box-sizing:border-box;"></div><svg class="a" style="left:789px;top:352px;" width="10" height="8" viewBox="0 0 10 8"><path d="M1 4 L3.8 6.8 L9 1.2" fill="none" stroke="#e6e6e6" stroke-width="1.5"/></svg><div class="a" style="left:642px;top:373px;width:353px;height:1px;background:#232323;"></div><div class="a" style="left:642px;top:374px;width:353px;height:20px;background:#3e3e3e;"></div><div class="a" style="left:642px;top:394px;width:353px;height:1px;background:#2e2e2e;"></div><svg class="a" style="left:648px;top:381px;" width="9" height="8" viewBox="0 0 9 8"><path d="M0 0.5 H9 L4.5 8 Z" fill="#7a7a7a"/></svg><div class="a" style="left:662px;top:377px;width:16px;height:16px;box-sizing:border-box;border:1.3px solid #12aef2;"></div><div class="a t" style="left:662px;top:377.5px;width:16px;text-align:center;font-family:'Liberation Serif',serif;font-size:16px;font-weight:700;color:#12aef2;">T</div><div class="a" style="left:682px;top:378px;width:14px;height:14px;background:#2a2a2a;border:1px solid #212121;border-radius:3px;box-sizing:border-box;"></div><svg class="a" style="left:684px;top:381px;" width="10" height="8" viewBox="0 0 10 8"><path d="M1 4 L3.8 6.8 L9 1.2" fill="none" stroke="#e6e6e6" stroke-width="1.5"/></svg><div class="a t" style="left:702px;top:379px;font-size:12.5px;color:#d2d2d2;font-weight:700;">TextMeshPro - Text (UI)</div><svg class="a" style="left:937px;top:379px;" width="11" height="11" viewBox="0 0 11 11"><circle cx="5.25" cy="5.25" r="5.25" fill="#c4c4c4"/><path d="M3.4 4.2 A1.9 1.9 0 1 1 6.1 5.8 C5.4 6.2 5.2 6.5 5.2 7.2" fill="none" stroke="#3e3e3e" stroke-width="1.5"/><rect x="4.5" y="8" width="1.4" height="1.4" fill="#3e3e3e"/></svg><svg class="a" style="left:956px;top:379px;" width="12" height="11" viewBox="0 0 12 11"><g fill="#c4c4c4"><rect x="0.5" y="2.8" width="10.5" height="1.5"/><rect x="0.5" y="7.9" width="10.5" height="1.5"/><rect x="7" y="0.5" width="2" height="5.5"/><rect x="4" y="5.8" width="2" height="5.2"/></g><g fill="#3e3e3e"><rect x="0.5" y="7.9" width="0" height="1.5"/></g></svg><svg class="a" style="left:980px;top:379px;" width="4" height="10" viewBox="0 0 4 10"><g fill="#c4c4c4"><rect x="0.6" y="0.2" width="2.4" height="2.4"/><rect x="0.6" y="4.1" width="2.4" height="2.4"/><rect x="0.6" y="8" width="2.4" height="2.4"/></g></svg><div class="a" style="left:651px;top:408px;width:340px;height:22px;background:#4e4e4e;border:1px solid #2a2a2a;border-radius:2px;box-sizing:border-box;"></div><div class="a t" style="left:661px;top:415px;font-size:12px;color:#d2d2d2;font-weight:700;">Text Input</div><div class="a t" style="left:855px;top:415px;font-size:12.5px;color:#c4c4c4;font-weight:400;">Enable RTL Editor</div><div class="a" style="left:965px;top:414px;width:14px;height:14px;background:#2a2a2a;border:1px solid #212121;border-radius:3px;box-sizing:border-box;"></div><div class="a" style="left:660px;top:450px;width:331px;height:40px;background:#2a2a2a;border:1px solid #1e1e1e;border-radius:3px;box-sizing:border-box;"></div><svg class="a" style="left:664px;top:456px;" width="10" height="9" viewBox="0 0 10 9"><path d="M9 4.5 H1.5 M5 1 L1.5 4.5 L5 8" fill="none" stroke="#b0b0b0" stroke-width="1.2"/></svg>
</body></html>
